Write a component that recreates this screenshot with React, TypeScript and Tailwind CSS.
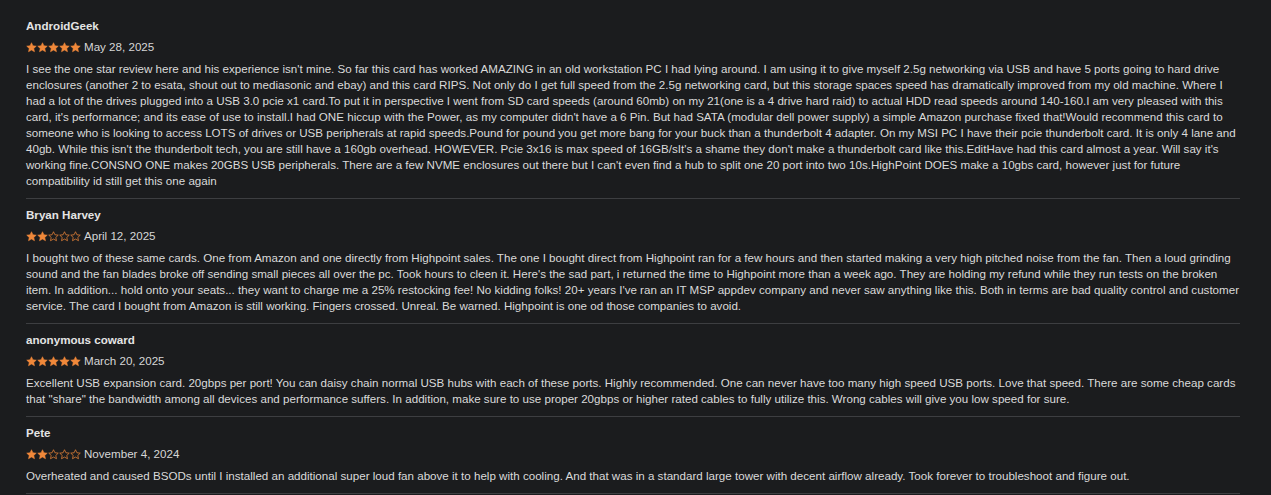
import React from 'react';

interface Review {
  author: string;
  rating: number;
  date: string;
  body: string;
}

const reviews: Review[] = [
  {
    author: 'AndroidGeek',
    rating: 5,
    date: 'May 28, 2025',
    body: "I see the one star review here and his experience isn't mine. So far this card has worked AMAZING in an old workstation PC I had lying around. I am using it to give myself 2.5g networking via USB and have 5 ports going to hard drive enclosures (another 2 to esata, shout out to mediasonic and ebay) and this card RIPS. Not only do I get full speed from the 2.5g networking card, but this storage spaces speed has dramatically improved from my old machine. Where I had a lot of the drives plugged into a USB 3.0 pcie x1 card.To put it in perspective I went from SD card speeds (around 60mb) on my 21(one is a 4 drive hard raid) to actual HDD read speeds around 140-160.I am very pleased with this card, it's performance; and its ease of use to install.I had ONE hiccup with the Power, as my computer didn't have a 6 Pin. But had SATA (modular dell power supply) a simple Amazon purchase fixed that!Would recommend this card to someone who is looking to access LOTS of drives or USB peripherals at rapid speeds.Pound for pound you get more bang for your buck than a thunderbolt 4 adapter. On my MSI PC I have their pcie thunderbolt card. It is only 4 lane and 40gb. While this isn't the thunderbolt tech, you are still have a 160gb overhead. HOWEVER. Pcie 3x16 is max speed of 16GB/sIt's a shame they don't make a thunderbolt card like this.EditHave had this card almost a year. Will say it's working fine.CONSNO ONE makes 20GBS USB peripherals. There are a few NVME enclosures out there but I can't even find a hub to split one 20 port into two 10s.HighPoint DOES make a 10gbs card, however just for future compatibility id still get this one again",
  },
  {
    author: 'Bryan Harvey',
    rating: 2,
    date: 'April 12, 2025',
    body: "I bought two of these same cards. One from Amazon and one directly from Highpoint sales. The one I bought direct from Highpoint ran for a few hours and then started making a very high pitched noise from the fan. Then a loud grinding sound and the fan blades broke off sending small pieces all over the pc. Took hours to cleen it. Here's the sad part, i returned the time to Highpoint more than a week ago. They are holding my refund while they run tests on the broken item. In addition... hold onto your seats... they want to charge me a 25% restocking fee! No kidding folks! 20+ years I've ran an IT MSP appdev company and never saw anything like this. Both in terms are bad quality control and customer service. The card I bought from Amazon is still working. Fingers crossed. Unreal. Be warned. Highpoint is one od those companies to avoid.",
  },
  {
    author: 'anonymous coward',
    rating: 5,
    date: 'March 20, 2025',
    body: 'Excellent USB expansion card. 20gbps per port! You can daisy chain normal USB hubs with each of these ports. Highly recommended. One can never have too many high speed USB ports. Love that speed. There are some cheap cards that "share" the bandwidth among all devices and performance suffers. In addition, make sure to use proper 20gbps or higher rated cables to fully utilize this. Wrong cables will give you low speed for sure.',
  },
  {
    author: 'Pete',
    rating: 2,
    date: 'November 4, 2024',
    body: 'Overheated and caused BSODs until I installed an additional super loud fan above it to help with cooling. And that was in a standard large tower with decent airflow already. Took forever to troubleshoot and figure out.',
  },
];

const STAR = 'M6 0.8 L7.55 4.1 L11.2 4.5 L8.5 7 L9.25 10.6 L6 8.8 L2.75 10.6 L3.5 7 L0.8 4.5 L4.45 4.1 Z';

function Stars({ rating }: { rating: number }) {
  return (
    <span className="flex items-center">
      {Array.from({ length: 5 }).map((_, i) => (
        <svg key={i} viewBox="0 0 12 12" className="w-[11px] h-[11px]">
          {i < rating ? (
            <path d={STAR} fill="#f0883a" stroke="#f0883a" strokeWidth={0.6} strokeLinejoin="round" />
          ) : (
            <path d={STAR} fill="none" stroke="#f0883a" strokeWidth={0.8} strokeLinejoin="round" />
          )}
        </svg>
      ))}
    </span>
  );
}

function ReviewItem({ review }: { review: Review }) {
  return (
    <div className="pt-2 pb-[9px] border-b border-[#3d3e41]">
      <div className="font-bold text-[#e4e4e4] leading-4">{review.author}</div>
      <div className="flex items-center gap-[3px] mt-[5px] leading-4">
        <Stars rating={review.rating} />
        <span className="text-[#d6d6d6]">{review.date}</span>
      </div>
      <p className="mt-[6px] text-[#dadada] leading-4">{review.body}</p>
    </div>
  );
}

export default function App() {
  return (
    <div
      className="min-h-[495px] bg-[#1b1c1e] pt-[10px] pl-[26px] text-[11.6px]"
      style={{ fontFamily: '"Liberation Sans", Arial, sans-serif' }}
    >
      <div className="w-[1214px]">
        {reviews.map((r) => (
          <ReviewItem key={r.author} review={r} />
        ))}
      </div>
    </div>
  );
}
